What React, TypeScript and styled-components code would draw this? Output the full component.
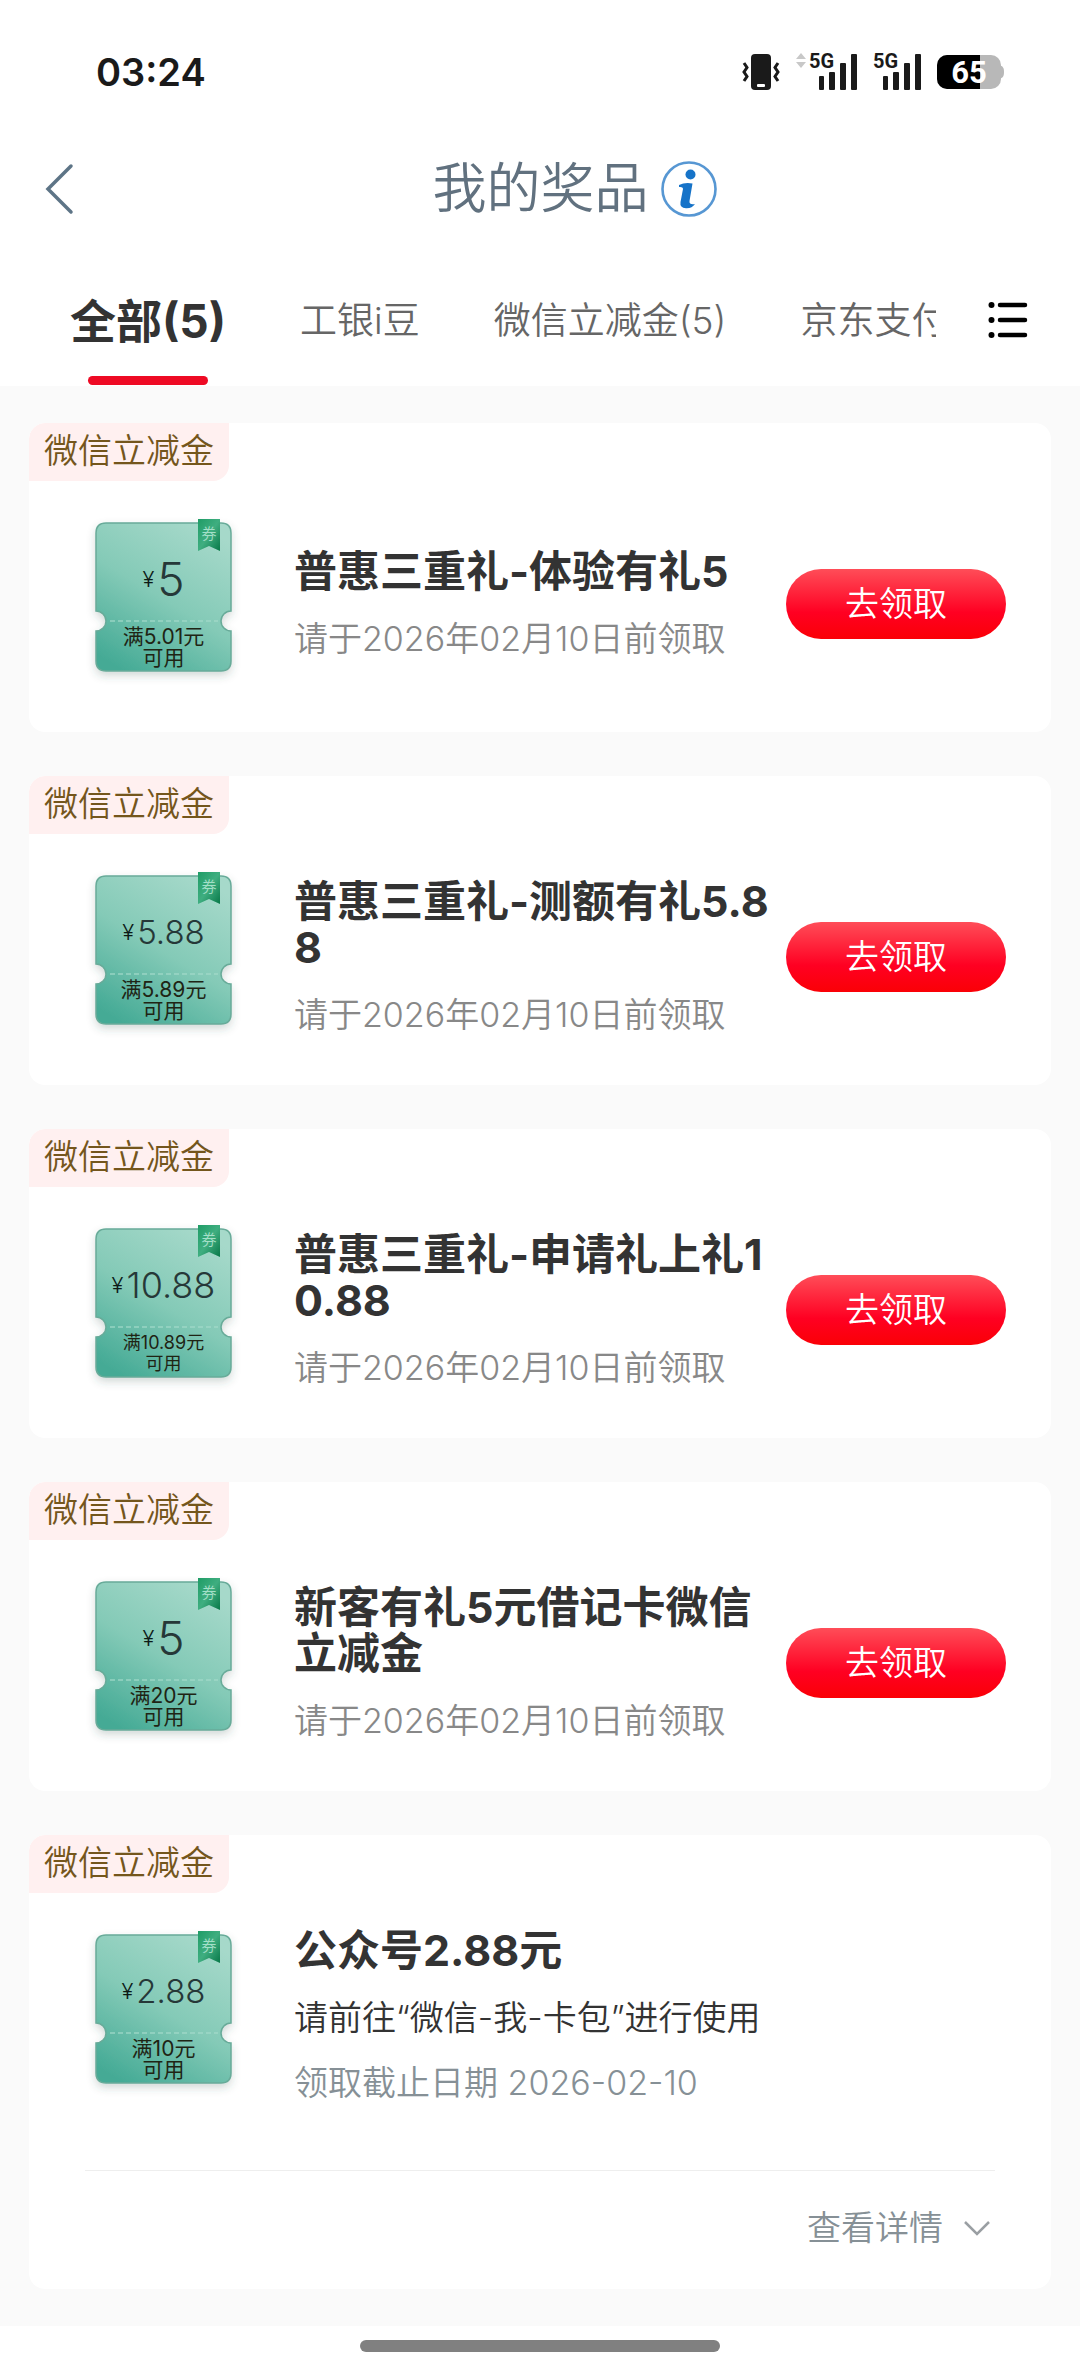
import React from "react";
import styled, { createGlobalStyle } from "styled-components";

const GlobalStyle = createGlobalStyle`
  * { box-sizing: border-box; }
  body {
    margin: 0;
    background: #fff;
    color: #333;
    font-family: Inter, "Noto Sans CJK SC", sans-serif;
    font-weight: 350;
  }
  button {
    margin: 0;
    padding: 0;
    border: 0;
    background: none;
    color: inherit;
    font: inherit;
    cursor: pointer;
  }
  h1, h2, p, ul { margin: 0; padding: 0; }
  svg { display: block; flex: none; }
`;

const Page = styled.div`
  display: flex;
  flex-direction: column;
`;

const StatusBar = styled.div`
  display: flex;
  align-items: center;
  justify-content: space-between;
  height: 144px;
  padding: 0 76px 0 96px;
`;

const Clock = styled.time`
  color: #1a1a1a;
  font-size: 38px;
  font-weight: 600;
  line-height: 48px;
`;

const StatusIcons = styled.div`
  display: flex;
  align-items: center;
  gap: 16px;
`;

const Header = styled.header`
  display: grid;
  grid-template-columns: 100px 1fr 100px;
  align-items: center;
  height: 90px;
`;

const BackButton = styled.button`
  display: flex;
  align-items: center;
  height: 90px;
  padding-left: 44px;
`;

const TitleGroup = styled.div`
  display: flex;
  align-items: center;
  justify-content: center;
  gap: 11px;
  padding-left: 70px;
`;

const PageTitle = styled.h1`
  color: #61717f;
  font-size: 54px;
  font-weight: 350;
  line-height: 64px;
`;

const TabBar = styled.nav`
  display: flex;
  height: 152px;
`;

const TabList = styled.div`
  display: flex;
  flex: 1;
  gap: 74px;
  min-width: 0;
  margin-left: 33px;
  padding-left: 37px;
  overflow: hidden;
`;

const Tab = styled.button<{ $active?: boolean }>`
  display: flex;
  flex: none;
  flex-direction: column;
  align-items: center;
  gap: 28px;
  padding-top: 60px;
  color: ${(p) => (p.$active ? "#333" : "#666")};
  font-size: ${(p) => (p.$active ? "46px" : "37px")};
  font-weight: ${(p) => (p.$active ? 700 : 350)};
  line-height: 54px;
  white-space: nowrap;
`;

const TabMarker = styled.span`
  width: 120px;
  height: 9px;
  border-radius: 5px;
  background: #ee0a24;
`;

const MenuButton = styled.button`
  display: flex;
  width: 144px;
  padding: 67px 0 0 52px;
`;

const PrizeList = styled.ul`
  display: flex;
  flex-direction: column;
  gap: 44px;
  padding: 37px 29px;
  background: #fafafa;
  list-style: none;
`;

const Card = styled.li`
  padding-bottom: 5px;
  border-radius: 16px;
  background: #fff;
  overflow: hidden;
`;

const Tag = styled.div`
  width: fit-content;
  height: 58px;
  padding: 0 15px;
  border-radius: 16px 0 16px 0;
  background: #fff0f0;
  color: #74561c;
  font-size: 34px;
  line-height: 56px;
`;

const CardBody = styled.div`
  display: flex;
  align-items: center;
  min-height: 246px;
  padding: 0 45px 0 66px;
`;

const Ticket = styled.div`
  display: grid;
  flex: none;
  width: 137px;
  margin-right: 62px;
  > * { grid-area: 1 / 1; }
`;

const TicketText = styled.div`
  display: flex;
  flex-direction: column;
  align-items: center;
  gap: 23px;
  padding-top: 36px;
  z-index: 1;
`;

const Price = styled.div<{ $size: number }>`
  display: flex;
  align-items: center;
  gap: 3px;
  height: 48px;
  color: #263838;
  font-size: ${(p) => p.$size}px;
  font-weight: 300;
  line-height: 48px;
`;

const Currency = styled.span`
  color: #0c1a16;
  font-size: 22px;
`;

const Condition = styled.div<{ $small?: boolean }>`
  color: #1f2414;
  font-size: ${(p) => (p.$small ? 18 : 21)}px;
  font-weight: 400;
  line-height: 21px;
  text-align: center;
`;

const Info = styled.div`
  flex: 1;
  min-width: 0;
  margin-right: 12px;
  padding-bottom: 2px;
`;

const PrizeName = styled.h2`
  color: #333;
  font-size: 43px;
  font-weight: 700;
  line-height: 46px;
  word-break: break-all;
`;

const Line = styled.p<{ $color: string }>`
  margin-top: 25px;
  color: ${(p) => p.$color};
  font-size: 34px;
  line-height: 40px;
  white-space: nowrap;
`;

const ClaimButton = styled.button`
  flex: none;
  width: 220px;
  height: 70px;
  border-radius: 35px;
  background: linear-gradient(180deg, #ff4d58 0%, #ff0022 62%, #fa0006 100%);
  color: #fff;
  font-size: 34px;
  line-height: 70px;
`;

const CardFooter = styled.div`
  display: flex;
  align-items: center;
  justify-content: flex-end;
  height: 114px;
  margin: 31px 56px 0;
  padding-right: 4px;
  border-top: 1px solid #eee;
`;

const DetailButton = styled.button`
  display: flex;
  align-items: center;
  gap: 20px;
  color: #869096;
  font-size: 34px;
  line-height: 40px;
`;

const HomeArea = styled.footer`
  display: flex;
  justify-content: center;
  padding: 14px 0 21px;
`;

const HomeBar = styled.div`
  width: 360px;
  height: 12px;
  border-radius: 6px;
  background: #808080;
`;

const VibrateIcon = () => (
  <svg width="38" height="36" viewBox="0 0 38 36" fill="none" aria-hidden="true">
    <rect x="9" width="20" height="36" rx="4" fill="#1a1a1a" />
    <rect x="15" y="30" width="8" height="3" rx="1" fill="#fff" />
    <path
      d="M2 9l3 4.500-3 4.500 3 4.500-3 4.500M36 9l-3 4.500 3 4.500-3 4.500 3 4.500"
      stroke="#1a1a1a"
      strokeWidth="3"
    />
  </svg>
);

const SignalIcon = ({ arrows }: { arrows?: boolean }) => {
  const x = arrows ? 13 : 0;
  return (
    <svg width={x + 48} height="50" viewBox={`0 -5 ${x + 48} 50`} aria-hidden="true">
      {arrows && <path d="M0 7l5-6 5 6zM0 10h10l-5 6z" fill="#c8c8c8" />}
      <text
        x={x}
        y="16"
        fill="#1a1a1a"
        fontFamily="'Liberation Sans Narrow', Roboto, sans-serif"
        fontSize="20"
        fontWeight="700"
      >
        5G
      </text>
      <g fill="#1a1a1a">
        <rect x={x + 10} y="24" width="5" height="14" rx="1" />
        <rect x={x + 20} y="20" width="6" height="18" rx="1" />
        <rect x={x + 31} y="11" width="6" height="27" rx="1" />
        <rect x={x + 42} y="2" width="6" height="36" rx="1" />
      </g>
    </svg>
  );
};

const BatteryIcon = () => (
  <svg width="67" height="44" viewBox="0 -5 67 44" role="img" aria-label="65%">
    <clipPath id="charge">
      <rect width="43" height="34" />
    </clipPath>
    <path d="M62 10c4 1 5 3 5 7s-1 6-5 7z" fill="#b8b8b8" />
    <rect width="64" height="34" rx="10" fill="#b8b8b8" />
    <rect width="64" height="34" rx="10" fill="#000" clipPath="url(#charge)" />
    <text
      x="32"
      y="28"
      fill="#fff"
      fontFamily="Roboto, sans-serif"
      fontSize="31"
      fontWeight="700"
      textAnchor="middle"
    >
      65
    </text>
  </svg>
);

const BackIcon = () => (
  <svg width="30" height="52" viewBox="0 0 30 52" fill="none" aria-hidden="true">
    <path d="M27 3L4 26l23 23" stroke="#5d7486" strokeWidth="3.500" strokeLinecap="round" />
  </svg>
);

const InfoIcon = () => (
  <svg width="58" height="58" viewBox="0 0 58 58" aria-hidden="true">
    <circle cx="29" cy="29" r="26.500" fill="#fff" stroke="#5797d3" strokeWidth="2.600" />
    <circle cx="30.500" cy="14.500" r="5" fill="#1673c8" />
    <path
      d="M19 25Q25 22 32.500 23.500L29.500 41Q29 45 35 44 32 48.500 26 48.200 19.500 48 20.500 42L23 29Q23 26.500 19 27Z"
      fill="#1673c8"
    />
  </svg>
);

const ListIcon = () => (
  <svg width="40" height="38" viewBox="0 0 40 38" aria-hidden="true">
    <g stroke="#000" strokeWidth="4.500" strokeLinecap="round">
      <path d="M12 4h25M12 19h25M12 34h25" />
    </g>
    <circle cx="3.500" cy="4" r="3" />
    <circle cx="3.500" cy="19" r="3" />
    <circle cx="3.500" cy="34" r="3" />
  </svg>
);

const ChevronDown = () => (
  <svg width="28" height="18" viewBox="0 0 28 18" fill="none" aria-hidden="true">
    <path d="M2 3l12 12L26 3" stroke="#9a9fa3" strokeWidth="2.500" />
  </svg>
);

const TicketArt = ({ id }: { id: string }) => (
  <svg width="137" height="170" viewBox="0 0 137 170" overflow="visible" aria-hidden="true">
    <defs>
      <linearGradient id={`${id}-paper`} x1="0.750" y1="0" x2="0.200" y2="1">
        <stop offset="0" stopColor="#a6d9ca" />
        <stop offset="0.500" stopColor="#84cab7" />
        <stop offset="1" stopColor="#44aa95" />
      </linearGradient>
      <linearGradient id={`${id}-ribbon`} x1="0" y1="0" x2="1" y2="1">
        <stop offset="0" stopColor="#1f9c66" />
        <stop offset="0.500" stopColor="#3fae80" />
        <stop offset="1" stopColor="#087848" />
      </linearGradient>
      <filter id={`${id}-shadow`} x="-15%" y="-15%" width="130%" height="135%">
        <feDropShadow dx="0" dy="4" stdDeviation="4" floodColor="#2d5548" floodOpacity="0.220" />
      </filter>
    </defs>
    <path
      d="M11 4H126Q136 4 136 14V92A10 10 0 0 0 136 112V142Q136 152 126 152H11Q1 152 1 142V112A10 10 0 0 0 1 92V14Q1 4 11 4Z"
      fill={`url(#${id}-paper)`}
      stroke="#68ab99"
      strokeWidth="1.500"
      filter={`url(#${id}-shadow)`}
    />
    <path d="M15 102H123" stroke="#a5dbcb" strokeWidth="2" strokeDasharray="5 3" opacity="0.600" />
    <path d="M103 0H125V32L114 27 103 32Z" fill={`url(#${id}-ribbon)`} />
    <text
      x="114"
      y="20"
      fill="#a4dfc8"
      fontFamily="'Noto Sans CJK SC', sans-serif"
      fontSize="15"
      textAnchor="middle"
    >
      券
    </text>
  </svg>
);

type Prize = {
  name: string;
  price: string;
  priceSize: number;
  threshold: string;
  small?: boolean;
  claimed?: boolean;
};

const prizes: Prize[] = [
  { name: "普惠三重礼-体验有礼5", price: "5", priceSize: 46, threshold: "满5.01元" },
  { name: "普惠三重礼-测额有礼5.88", price: "5.88", priceSize: 33, threshold: "满5.89元" },
  { name: "普惠三重礼-申请礼上礼10.88", price: "10.88", priceSize: 36, threshold: "满10.89元", small: true },
  { name: "新客有礼5元借记卡微信立减金", price: "5", priceSize: 46, threshold: "满20元" },
  { name: "公众号2.88元", price: "2.88", priceSize: 33, threshold: "满10元", claimed: true },
];

const PrizeCard = ({ prize, id }: { prize: Prize; id: string }) => (
  <Card>
    <Tag>微信立减金</Tag>
    <CardBody>
      <Ticket>
        <TicketArt id={id} />
        <TicketText>
          <Price $size={prize.priceSize}>
            <Currency>¥</Currency>
            {prize.price}
          </Price>
          <Condition $small={prize.small}>
            {prize.threshold}
            <br />
            可用
          </Condition>
        </TicketText>
      </Ticket>
      <Info>
        <PrizeName>{prize.name}</PrizeName>
        {prize.claimed ? (
          <>
            <Line $color="#333">请前往“微信-我-卡包”进行使用</Line>
            <Line $color="#869096">领取截止日期 2026-02-10</Line>
          </>
        ) : (
          <Line $color="#888">请于2026年02月10日前领取</Line>
        )}
      </Info>
      {!prize.claimed && <ClaimButton type="button">去领取</ClaimButton>}
    </CardBody>
    {prize.claimed && (
      <CardFooter>
        <DetailButton type="button">
          查看详情
          <ChevronDown />
        </DetailButton>
      </CardFooter>
    )}
  </Card>
);

export default function App() {
  return (
    <Page>
      <GlobalStyle />
      <StatusBar>
        <Clock>03:24</Clock>
        <StatusIcons>
          <VibrateIcon />
          <SignalIcon arrows />
          <SignalIcon />
          <BatteryIcon />
        </StatusIcons>
      </StatusBar>
      <Header>
        <BackButton type="button" aria-label="返回">
          <BackIcon />
        </BackButton>
        <TitleGroup>
          <PageTitle>我的奖品</PageTitle>
          <button type="button" aria-label="说明">
            <InfoIcon />
          </button>
        </TitleGroup>
      </Header>
      <TabBar>
        <TabList>
          <Tab type="button" $active>
            全部(5)
            <TabMarker />
          </Tab>
          <Tab type="button">工银i豆</Tab>
          <Tab type="button">微信立减金(5)</Tab>
          <Tab type="button">京东支付</Tab>
        </TabList>
        <MenuButton type="button" aria-label="全部分类">
          <ListIcon />
        </MenuButton>
      </TabBar>
      <PrizeList>
        {prizes.map((prize, i) => (
          <PrizeCard key={prize.name} prize={prize} id={`ticket${i}`} />
        ))}
      </PrizeList>
      <HomeArea>
        <HomeBar />
      </HomeArea>
    </Page>
  );
}
